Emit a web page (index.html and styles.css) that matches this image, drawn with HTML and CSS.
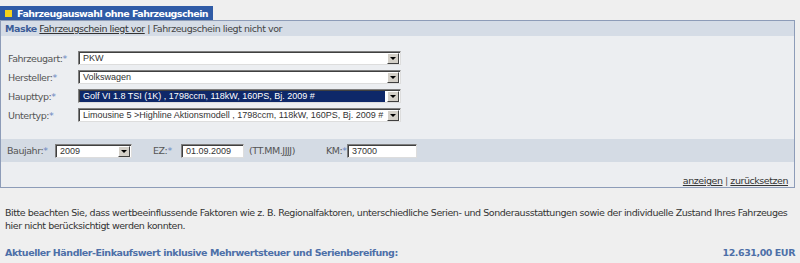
FILE: index.html
```html
<!DOCTYPE html>
<html lang="de">
<head>
<meta charset="utf-8">
<link rel="stylesheet" href="styles.css">
</head>
<body>
<div class="tab"><span class="sq"></span>Fahrzeugauswahl ohne Fahrzeugschein</div>
<div class="box">
  <div class="maskbar"><b class="mlabel">Maske</b> <a class="lnk">Fahrzeugschein liegt vor</a> | Fahrzeugschein liegt nicht vor</div>
  <div class="fields">
    <div class="row"><span class="lbl">Fahrzeugart:<i>*</i></span><div class="sel wide"><span class="val">PKW</span><span class="btn"></span></div></div>
    <div class="row"><span class="lbl">Hersteller:<i>*</i></span><div class="sel wide"><span class="val">Volkswagen</span><span class="btn"></span></div></div>
    <div class="row"><span class="lbl">Haupttyp:<i>*</i></span><div class="sel wide"><span class="val hl">Golf VI 1.8 TSI (1K) , 1798ccm, 118kW, 160PS, Bj. 2009 #</span><span class="btn"></span></div></div>
    <div class="row"><span class="lbl">Untertyp:<i>*</i></span><div class="sel wide"><span class="val">Limousine 5 &gt;Highline Aktionsmodell , 1798ccm, 118kW, 160PS, Bj. 2009 #</span><span class="btn"></span></div></div>
  </div>
  <div class="band">
    <span class="lbl2 bj">Baujahr:<i>*</i></span><div class="sel year"><span class="val">2009</span><span class="btn"></span></div>
    <span class="lbl2 ez">EZ:<i>*</i></span><div class="inp ezin">01.09.2009</div><span class="hint">(TT.MM.JJJJ)</span>
    <span class="lbl2 km">KM:<i>*</i></span><div class="inp kmin">37000</div>
  </div>
  <div class="actions"><a class="lnk">anzeigen</a> | <a class="lnk">zurücksetzen</a></div>
</div>
<p class="note">Bitte beachten Sie, dass wertbeeinflussende Faktoren wie z. B. Regionalfaktoren, unterschiedliche Serien- und Sonderausstattungen sowie der individuelle Zustand Ihres Fahrzeuges hier nicht berücksichtigt werden konnten.</p>
<div class="result"><span>Aktueller Händler-Einkaufswert inklusive Mehrwertsteuer und Serienbereifung:</span><span>12.631,00 EUR</span></div>
</body>
</html>
```

FILE: styles.css
```css
* { box-sizing: border-box; }
body {
  margin: 0;
  background: #efefef;
  font-family: "DejaVu Sans", Verdana, sans-serif;
  font-size: 9.5px;
  letter-spacing: -0.45px;
  color: #333;
}
.tab {
  margin-top: 6px;
  display: flex;
  align-items: center;
  width: 213px;
  height: 14px;
  background: #2f5ba6;
  color: #fff;
  font-weight: bold;
  font-size: 9.5px;
  letter-spacing: -0.55px;
  white-space: nowrap;
  padding-left: 5px;
}
.sq {
  width: 7px;
  height: 7px;
  background: #f5d21c;
  margin-right: 5px;
}
.box {
  width: 795px;
  border: 1px solid #8d9cb8;
  background: #eceef1;
  height: 168px;
}
.maskbar {
  background: #d5dce6;
  height: 15px;
  line-height: 15px;
  padding-left: 4px;
  color: #444;
}
.mlabel { color: #3d5c98; font-weight: bold; }
.lnk { color: #333; text-decoration: underline; }
.fields {
  padding: 15px 0 0 7px;
  display: flex;
  flex-direction: column;
  gap: 5px;
}
.row { display: flex; align-items: center; height: 14px; }
.lbl { width: 70px; color: #555; }
i { font-style: normal; color: #6a86c0; }
.sel {
  display: flex;
  height: 14px;
  background: #fff;
  border: 1px solid #7f7f7f;
  border-right-color: #ddd;
  border-bottom-color: #ddd;
  box-shadow: inset 1px 1px 0 #404040;
}
.wide { width: 323px; }
.val {
  flex: 1;
  font-family: "Liberation Sans", Arial, sans-serif;
  font-size: 9px;
  letter-spacing: 0;
  line-height: 11px;
  color: #333;
  padding-left: 3px;
  margin: 1px 1px 0 1px;
  white-space: nowrap;
  overflow: hidden;
}
.val.hl { background: #0e2869; color: #fff; margin-right: 2px; }
.btn {
  width: 12px;
  height: 11px;
  margin: 1px 1px 0 0;
  background: #d4d0c8;
  border: 1px solid;
  border-color: #fff #404040 #404040 #fff;
  position: relative;
}
.btn::after {
  content: "";
  position: absolute;
  left: 2px;
  top: 3px;
  border-left: 3px solid transparent;
  border-right: 3px solid transparent;
  border-top: 3px solid #000;
}
.band {
  margin-top: 17px;
  background: #d4dbe4;
  height: 23px;
  display: flex;
  align-items: center;
  padding-left: 6px;
}
.lbl2 { color: #555; }
.bj { width: 48px; }
.year { width: 77px; }
.ez { margin-left: 21px; width: 28px; }
.inp {
  height: 14px;
  background: #fff;
  border: 1px solid #7f7f7f;
  border-right-color: #ddd;
  border-bottom-color: #ddd;
  box-shadow: inset 1px 1px 0 #404040;
  font-family: "Liberation Sans", Arial, sans-serif;
  font-size: 9px;
  letter-spacing: 0;
  line-height: 12px;
  padding-left: 4px;
  color: #333;
}
.ezin { width: 63px; }
.hint { margin-left: 5px; width: 77px; color: #555; }
.km { width: 21px; }
.kmin { width: 70px; }
.actions {
  margin-top: 13px;
  text-align: right;
  padding-right: 6px;
  color: #555;
}
.note {
  margin: 18px 0 0 5px;
  width: 795px;
  line-height: 13px;
  color: #333;
}
.result {
  margin: 15px 0 0 5px;
  width: 790px;
  display: flex;
  justify-content: space-between;
  color: #4d6fa8;
  font-weight: bold;
}
```
